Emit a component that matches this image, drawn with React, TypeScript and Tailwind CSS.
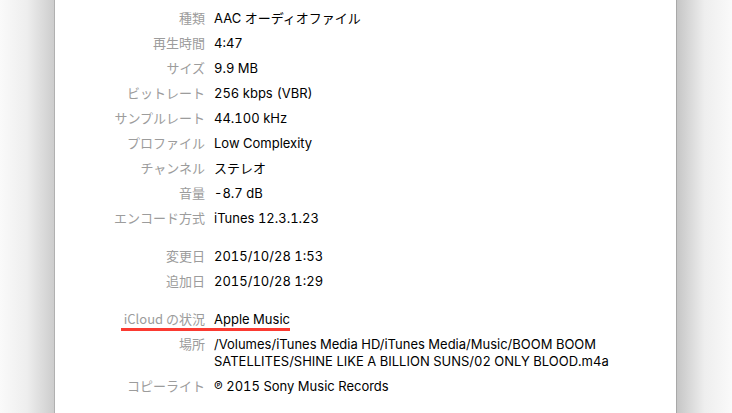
import React from "react";

type Row = { label: string; value: React.ReactNode; gapBefore?: boolean; highlight?: boolean };

const rows: Row[] = [
  { label: "種類", value: "AAC オーディオファイル" },
  { label: "再生時間", value: "4:47" },
  { label: "サイズ", value: "9.9 MB" },
  {
    label: "ビットレート",
    value: (
      <>
        256 kbps<span className="ml-[4px]">(VBR)</span>
      </>
    ),
  },
  { label: "サンプルレート", value: "44.100 kHz" },
  { label: "プロファイル", value: "Low Complexity" },
  { label: "チャンネル", value: "ステレオ" },
  { label: "音量", value: "-8.7 dB" },
  { label: "エンコード方式", value: "iTunes 12.3.1.23" },
  { label: "変更日", value: "2015/10/28 1:53", gapBefore: true },
  { label: "追加日", value: "2015/10/28 1:29" },
  { label: "iCloud の状況", value: "Apple Music", gapBefore: true, highlight: true },
  {
    label: "場所",
    value: (
      <>
        /Volumes/iTunes Media HD/iTunes Media/Music/BOOM BOOM
        <br />
        SATELLITES/SHINE LIKE A BILLION SUNS/02 ONLY BLOOD.m4a
      </>
    ),
  },
  { label: "コピーライト", value: "℗ 2015 Sony Music Records" },
];

export default function App() {
  return (
    <div className="flex h-[413px] w-[732px] overflow-hidden font-['Inter','Noto_Sans_CJK_JP',sans-serif]">
      <div className="h-full w-[55px] border-r border-[#b0b0b0] bg-gradient-to-r from-[#fafafa] via-[#eeeeee] to-[#cdcdcd]" />
      <div className="flex-1 bg-white pt-[10px]">
        <div className="flex flex-col gap-[8px]">
          {rows.map((r, i) => (
            <div key={i} className={`relative flex items-baseline ${r.gapBefore ? "mt-[13px]" : ""}`}>
              <div className="w-[150px] shrink-0 text-right font-['Noto_Sans_CJK_JP','Inter',sans-serif] text-[13px] leading-[13px] text-[#9c9c9c]">
                {r.label}
              </div>
              <div className="ml-[9px] text-[13px] leading-[17px] tabular-nums text-black">{r.value}</div>
              {r.highlight && (
                <div className="absolute left-[66px] top-[17px] h-[3px] w-[169px] bg-[#fb3a31]" />
              )}
            </div>
          ))}
        </div>
      </div>
      <div className="h-full w-[56px] border-l border-[#a8a8a8] bg-gradient-to-r from-[#c6c6c6] via-[#eeeeee] to-[#fafafa]" />
    </div>
  );
}
